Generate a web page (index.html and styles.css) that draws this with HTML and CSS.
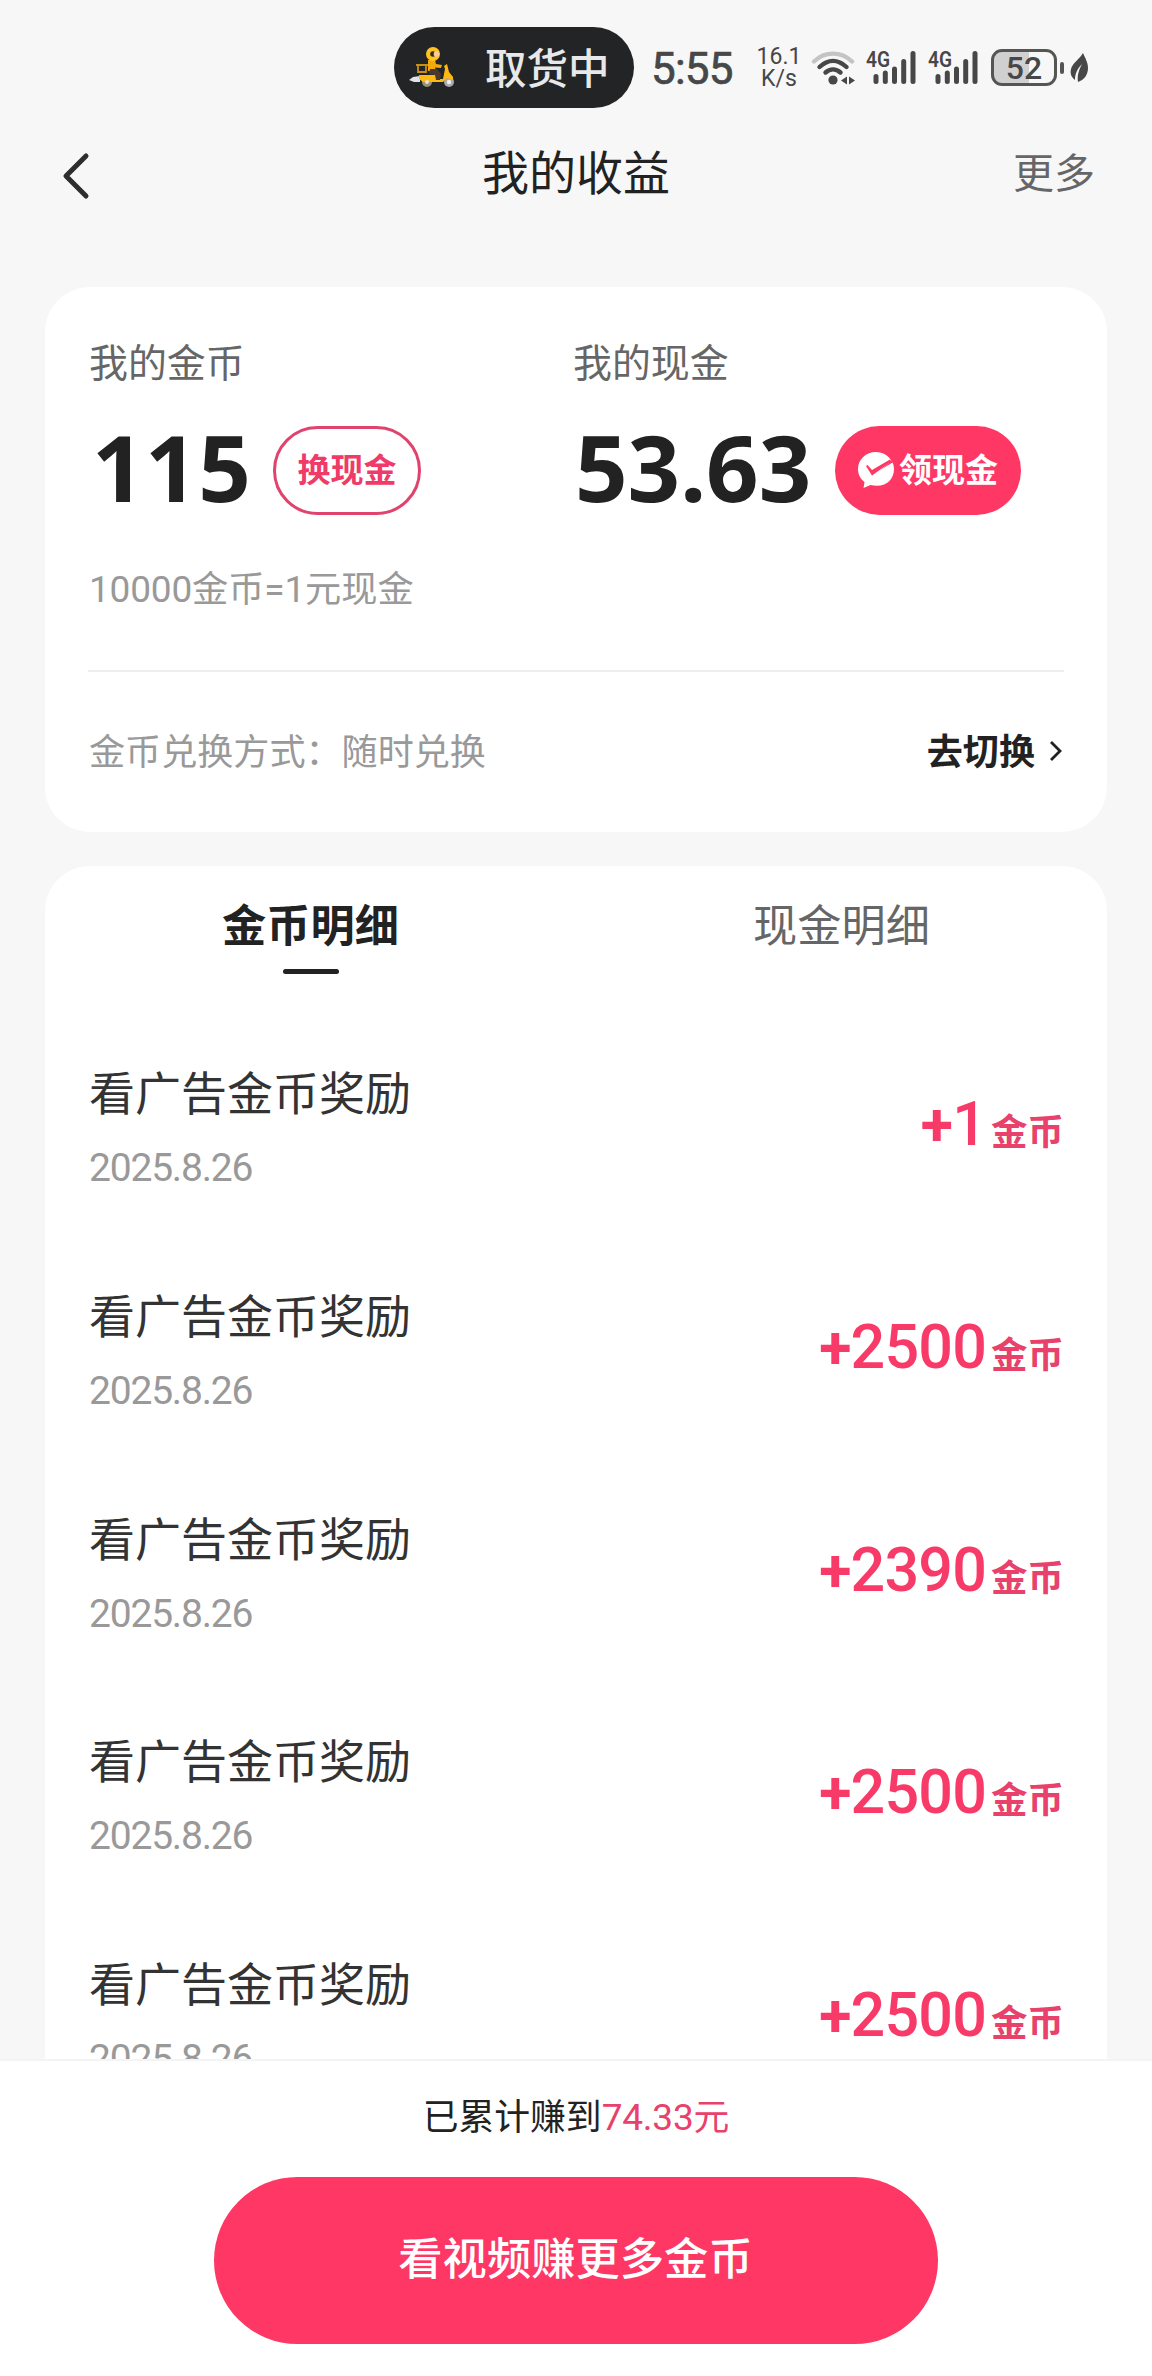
FILE: index.html
```html
<!DOCTYPE html>
<html lang="zh-CN">
<head>
<meta charset="utf-8">
<title>我的收益</title>
<link rel="stylesheet" href="styles.css">
</head>
<body>
<div class="app">
  <div class="statusbar">
    <div class="activity">
      <svg class="rider" width="48" height="42" viewBox="0 0 48 42">
        <path d="M0 33 4 30 11 29v6H5z" fill="#dfe3ea"/>
        <path d="M7 18h13M9 18v7h8v-7" fill="none" stroke="#c98f14" stroke-width="1.800"/>
        <circle cx="18" cy="35" r="5" fill="#9a8f78"/><circle cx="40" cy="35" r="5" fill="#aaa"/>
        <path d="M10 28h17l1 4h6l2-10-1-3 3-2 2 8 4 5v3l-6-2-4 4H14l-4-3z" fill="#fdb913"/>
        <circle cx="18" cy="35" r="2" fill="#e8e2d0"/><circle cx="40" cy="35" r="2.200" fill="#eee"/>
        <path d="M19 13h7l1 4 6 1-1 3-6-.5 1 3.500h-8z" fill="#f2a90c"/>
        <path d="M21 22h7l4 5-1 6h-4l-1-5-6-1z" fill="#4b3a2c"/>
        <circle cx="24" cy="7" r="7" fill="#fdc421"/>
        <circle cx="24" cy="7" r="2.800" fill="#3a2c1c"/><circle cx="27.500" cy="7" r="2.800" fill="#ffc9a0"/>
      </svg>
      <span>取货中</span>
    </div>
    <div class="clock">5:55</div>
    <div class="speed"><span>16.1</span><span>K/s</span></div>
    <svg class="wifi" width="46" height="36" viewBox="0 0 46 36">
      <g fill="none" stroke-linecap="round" stroke-width="4.400">
        <path d="M3 11.500C14 1 30 1 41 11.500" stroke="#c4c4c4"/>
        <path d="M8.500 17C17 9 27 9 35.500 17" stroke="#474747"/>
        <path d="M14.500 22.500C19 18.500 25 18.500 29.500 22.500" stroke="#474747"/>
      </g>
      <circle cx="22" cy="30" r="4.600" fill="#474747"/>
      <path d="M30 30.500 36 26.500v8zM44 30.500 38 26.500v8z" fill="#474747"/>
    </svg>
    <svg class="signal" width="51" height="40" viewBox="0 -4 51 40">
      <path d="M10 26.500v5M19.300 23v8.500M28.500 19v12.500M37.700 11.500v20M47 3.500v28" stroke="#474747" stroke-width="5" stroke-linecap="round"/>
      <text class="net" x="0" y="17" textLength="24" lengthAdjust="spacingAndGlyphs">4G</text>
    </svg>
    <svg class="signal" width="51" height="40" viewBox="0 -4 51 40">
      <path d="M10 26.500v5M19.300 23v8.500M28.500 19v12.500M37.700 11.500v20M47 3.500v28" stroke="#474747" stroke-width="5" stroke-linecap="round"/>
      <text class="net" x="0" y="17" textLength="24" lengthAdjust="spacingAndGlyphs">4G</text>
    </svg>
    <div class="battery"><span>52</span></div>
    <div class="nub"></div>
    <svg class="leaf" width="19" height="30" viewBox="0 0 19 30">
      <path d="M13 0C15 5 18 9 18 15 18 22 14 27 8 29 7 22 9 17 12 11 7 16 5 21 5 27 1 24 0 20 1 16 3 9 10 6 13 0z" fill="#474747"/>
    </svg>
  </div>

  <header class="navbar">
    <svg width="30" height="48" viewBox="0 0 30 48"><path d="M26 4 6 24 26 44" fill="none" stroke="#2e2e2e" stroke-width="5" stroke-linecap="round" stroke-linejoin="round"/></svg>
    <h1>我的收益</h1>
    <a class="more">更多</a>
  </header>

  <main class="content">
    <section class="card balance">
      <div class="accounts">
        <div class="account">
          <div class="label">我的金币</div>
          <div class="amount"><strong>115</strong><button class="pill outline">换现金</button></div>
          <div class="rate"><span class="num">10000</span>金币<span class="num">=1</span>元现金</div>
        </div>
        <div class="account">
          <div class="label">我的现金</div>
          <div class="amount"><strong>53.63</strong><button class="pill solid">
            <svg width="36" height="37" viewBox="0 0 36 37"><path d="M18 0C8 0 0 7.500 0 17c0 5.500 2.500 10 6.500 13L5.500 36l7-3C27 36.500 36 28 36 17c0-2-.5-4.500-1.500-6.500L15 22.500 9 15l-.5 3L14 25 33.500 9C30.500 3.500 25 0 18 0z" fill="#fff"/><path d="m8 14 1.500-1 4.500 5L32 7.500l1.500 2L14 23.500z" fill="#ff3765"/></svg>
            <span>领现金</span></button></div>
        </div>
      </div>
      <div class="method">
        <span>金币兑换方式：随时兑换</span>
        <a class="switch">去切换<svg width="14" height="22" viewBox="0 0 14 22"><path d="M2 2l9 9-9 9" fill="none" stroke="#222" stroke-width="2.800"/></svg></a>
      </div>
    </section>

    <section class="card details">
      <nav class="tabs">
        <a class="tab active">金币明细</a>
        <a class="tab">现金明细</a>
      </nav>
      <ul class="records">
        <li><div><p class="name">看广告金币奖励</p><p class="date">2025.8.26</p></div><p class="gain"><i>+</i>1<b>金币</b></p></li>
        <li><div><p class="name">看广告金币奖励</p><p class="date">2025.8.26</p></div><p class="gain"><i>+</i>2500<b>金币</b></p></li>
        <li><div><p class="name">看广告金币奖励</p><p class="date">2025.8.26</p></div><p class="gain"><i>+</i>2390<b>金币</b></p></li>
        <li><div><p class="name">看广告金币奖励</p><p class="date">2025.8.26</p></div><p class="gain"><i>+</i>2500<b>金币</b></p></li>
        <li><div><p class="name">看广告金币奖励</p><p class="date">2025.8.26</p></div><p class="gain"><i>+</i>2500<b>金币</b></p></li>
      </ul>
    </section>
  </main>

  <footer class="bottom">
    <p class="total">已累计赚到<em><span class="num">74.33</span>元</em></p>
    <button class="cta">看视频赚更多金币</button>
  </footer>
</div>
</body>
</html>
```
FILE: styles.css
```css
* { box-sizing: border-box; margin: 0; padding: 0; }
body {
  background: #f7f7f7;
  color: #222;
  font-family: "Noto Sans CJK SC", sans-serif;
}
button { border: 0; background: none; font-family: inherit; }
svg { display: block; flex: none; }
ul { list-style: none; }
i, em { font-style: normal; }
.num { font-family: Roboto, sans-serif; font-size: 37px; letter-spacing: -0.2px; }

.app { display: flex; flex-direction: column; width: 1152px; height: 2376px; overflow: hidden; }

/* status bar */
.statusbar {
  display: flex; align-items: center; flex: none;
  height: 135px; padding-left: 394px;
  color: #474747; font-family: Roboto, sans-serif;
}
.activity {
  display: flex; align-items: center; gap: 28px; flex: none;
  width: 240px; height: 81px; padding-left: 15px; border-radius: 41px;
  background: #222426; color: #e6e8ea;
  font: 500 41.500px/80px "Noto Sans CJK SC", sans-serif;
}
.activity span { margin-top: -4px; }
.clock { flex: none; width: 106px; margin: 2px 0 0 17px; font-size: 44px; line-height: 54px; font-weight: 400; letter-spacing: -0.800px; -webkit-text-stroke: 0.7px #474747; }
.speed {
  display: flex; flex-direction: column; align-items: center; flex: none;
  width: 44px; margin-right: 10px; font-size: 23px; line-height: 22px;
}
.signal { margin: 0 0 4px 9px; }
.signal + .signal { margin-left: 11px; }
.net { font: 600 22px Roboto, sans-serif; fill: #474747; }
.battery {
  flex: none; width: 66px; height: 37px; margin-left: 12px;
  border: 3px solid #555; border-radius: 11px;
  background: linear-gradient(90deg, #d0d0d0 58%, #f7f7f7 58%);
  font-size: 32px; line-height: 32px; font-weight: 500; text-align: center;
}
.nub { width: 4px; height: 12px; margin: 0 6px 0 3px; border-radius: 2px; background: #555; }

/* navigation */
.navbar {
  display: grid; grid-template-columns: 1fr auto 1fr; align-items: center; flex: none;
  height: 80px; padding: 1px 57px 0 60px;
}
.navbar h1 { font-size: 47px; font-weight: 400; line-height: 70px; margin: -11px 0 0 -3px; }
.more { justify-self: end; font-size: 41px; line-height: 60px; color: #666; margin-top: -11px; }

/* cards */
.content {
  display: flex; flex-direction: column; gap: 34px;
  flex: none; height: 1844px; padding: 72px 45px 0; overflow: hidden;
}
.card { flex: none; width: 1062px; border-radius: 45px; background: #fff; }
.balance { height: 545px; padding: 0 43px; }
.accounts { display: grid; grid-template-columns: 484px 1fr; height: 385px; padding: 43px 2px 0 1px; border-bottom: 2px solid #eee; }
.label { font-size: 38.900px; line-height: 60px; color: #666; }
.amount { display: flex; align-items: center; height: 90px; margin-top: 35px; }
.amount strong { width: 184px; font: 700 92px/90px "Noto Sans", "Open Sans", sans-serif; padding: 0 0 6px 3px; letter-spacing: 0.500px; }
.account + .account strong { width: 262px; padding-left: 2px; letter-spacing: 0; }
.pill {
  display: flex; align-items: center; justify-content: center; flex: none;
  height: 89px; border-radius: 45px; font-size: 33px; line-height: 50px; font-weight: 700;
}
.pill span, .outline { padding-bottom: 4px; }
.outline { width: 148px; border: 3px solid #e0436d; color: #f03a68; }
.solid { width: 186px; gap: 5px; background: #ff3765; color: #fff; }
.rate { margin-top: 43px; font-size: 36.200px; line-height: 56px; color: #999; }
.method {
  display: flex; align-items: center; justify-content: space-between;
  height: 153px; padding: 0 0 0 1px; font-size: 36.100px; color: #999;
}
.switch { display: flex; align-items: center; gap: 14px; padding-right: 1px; color: #222; font-weight: 700; }
.switch svg { margin-top: 5px; }

.details { height: 1500px; }
.tabs { display: grid; grid-template-columns: 1fr 1fr; height: 117px; }
.tab {
  display: flex; flex-direction: column; align-items: center;
  padding: 25px 0 0 0; font-size: 44.200px; line-height: 64px; color: #666;
}
.tab.active { color: #222; font-weight: 700; }
.tab.active::after { content: ""; width: 56px; height: 5px; margin-top: 14px; border-radius: 3px; background: #222; }
.records { padding: 0 43px 0 44px; }
.records li { display: flex; justify-content: space-between; height: 222.800px; padding-top: 73px; }
.name { font-size: 46px; line-height: 68px; color: #333; }
.date { margin-top: 19px; font: 39px/50px Roboto, sans-serif; letter-spacing: -1.200px; color: #999; }
.gain {
  display: flex; align-items: baseline; height: 100px; margin-top: 28px;
  font: 500 61px/80px Roboto, sans-serif; letter-spacing: -0.800px; color: #f83a69;
}
.gain i { font-weight: 700; font-size: 59px; }
.gain b { margin-left: 5px; font: 700 36.500px/60px "Noto Sans CJK SC", sans-serif; color: #e8416c; letter-spacing: 0; }

/* bottom bar */
.bottom {
  display: flex; flex-direction: column; align-items: center; flex: 1;
  background: #fff; border-top: 2px solid #f4f4f4;
}
.total { margin-top: 26px; font-size: 35.800px; line-height: 54px; }
.total em { color: #e8416c; }
.cta {
  flex: none; width: 724px; height: 167px; margin-top: 32px; padding: 0 1px 9px 0; border-radius: 84px;
  background: #ff3765; color: #fff; font-size: 44.300px; font-weight: 500;
}
```
